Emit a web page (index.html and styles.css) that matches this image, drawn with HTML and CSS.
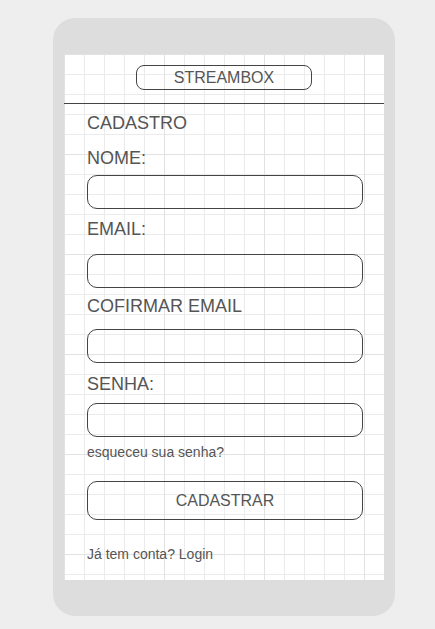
FILE: index.html
```html
<!DOCTYPE html>
<html lang="pt">
<head>
<meta charset="utf-8">
<title>Streambox - Cadastro</title>
<link rel="stylesheet" href="styles.css">
</head>
<body>
<div class="phone">
  <div class="screen">
    <header class="topbar">
      <div class="brand">STREAMBOX</div>
    </header>
    <main class="content">
      <h1 class="title">CADASTRO</h1>
      <label class="label label-nome" for="nome">NOME:</label>
      <input class="field field-nome" id="nome" type="text">
      <label class="label label-email" for="email">EMAIL:</label>
      <input class="field field-email" id="email" type="text">
      <label class="label label-confirm" for="confirm">COFIRMAR EMAIL</label>
      <input class="field field-confirm" id="confirm" type="text">
      <label class="label label-senha" for="senha">SENHA:</label>
      <input class="field field-senha" id="senha" type="password">
      <p class="small forgot">esqueceu sua senha?</p>
      <button class="submit" type="button">CADASTRAR</button>
      <p class="small login">Já tem conta? Login</p>
    </main>
  </div>
</div>
</body>
</html>
```

FILE: styles.css
```css
* {
  box-sizing: border-box;
}

html, body {
  margin: 0;
  padding: 0;
}

body {
  background: #eeeeee;
  font-family: "Liberation Sans", Arial, sans-serif;
  color: #555555;
}

.phone {
  margin: 18px 0 0 53px;
  width: 342px;
  height: 598px;
  padding: 36px 11px;
  background: #dddddd;
  border-radius: 22px;
}

.screen {
  width: 320px;
  height: 526px;
  background-color: #ffffff;
  background-image:
    linear-gradient(to right, #e2e2e2 1px, transparent 1px),
    linear-gradient(to bottom, #e2e2e2 1px, transparent 1px),
    linear-gradient(to right, #ebebeb 1px, transparent 1px),
    linear-gradient(to bottom, #ebebeb 1px, transparent 1px);
  background-size: 100px 100px, 100px 100px, 20px 20px, 20px 20px;
  overflow: hidden;
}

.topbar {
  padding: 11px 0 13px;
  border-bottom: 1px solid #444444;
  display: flex;
  justify-content: center;
}

.brand {
  width: 176px;
  height: 25px;
  padding-top: 1px;
  border: 1px solid #444444;
  border-radius: 8px;
  font-size: 16px;
  line-height: 22px;
  text-align: center;
}

.content {
  padding: 0 21px 0 23px;
}

.title {
  margin: 9px 0 0;
  font-size: 18px;
  font-weight: normal;
  line-height: 20px;
}

.label {
  display: block;
  font-size: 18px;
  line-height: 20px;
}

.label-nome { margin-top: 15px; }
.label-email { margin-top: 10px; }
.label-confirm { margin-top: 8px; }
.label-senha { margin-top: 11px; }

.field {
  display: block;
  width: 276px;
  height: 34px;
  margin: 0;
  border: 1px solid #444444;
  border-radius: 10px;
  background: transparent;
  font-family: inherit;
  font-size: 16px;
  padding: 0 10px;
  outline: none;
}

.field-nome { margin-top: 7px; }
.field-email { margin-top: 15px; }
.field-confirm { margin-top: 13px; }
.field-senha { margin-top: 9px; }

.small {
  margin: 0;
  font-size: 14px;
  line-height: 16px;
}

.forgot {
  margin-top: 7px;
}

.submit {
  display: block;
  width: 276px;
  height: 39px;
  margin-top: 21px;
  padding: 1px 0 0;
  border: 1px solid #444444;
  border-radius: 10px;
  background: transparent;
  font-family: inherit;
  font-size: 16px;
  line-height: 36px;
  color: #555555;
  text-align: center;
}

.login {
  margin-top: 26px;
}
```
